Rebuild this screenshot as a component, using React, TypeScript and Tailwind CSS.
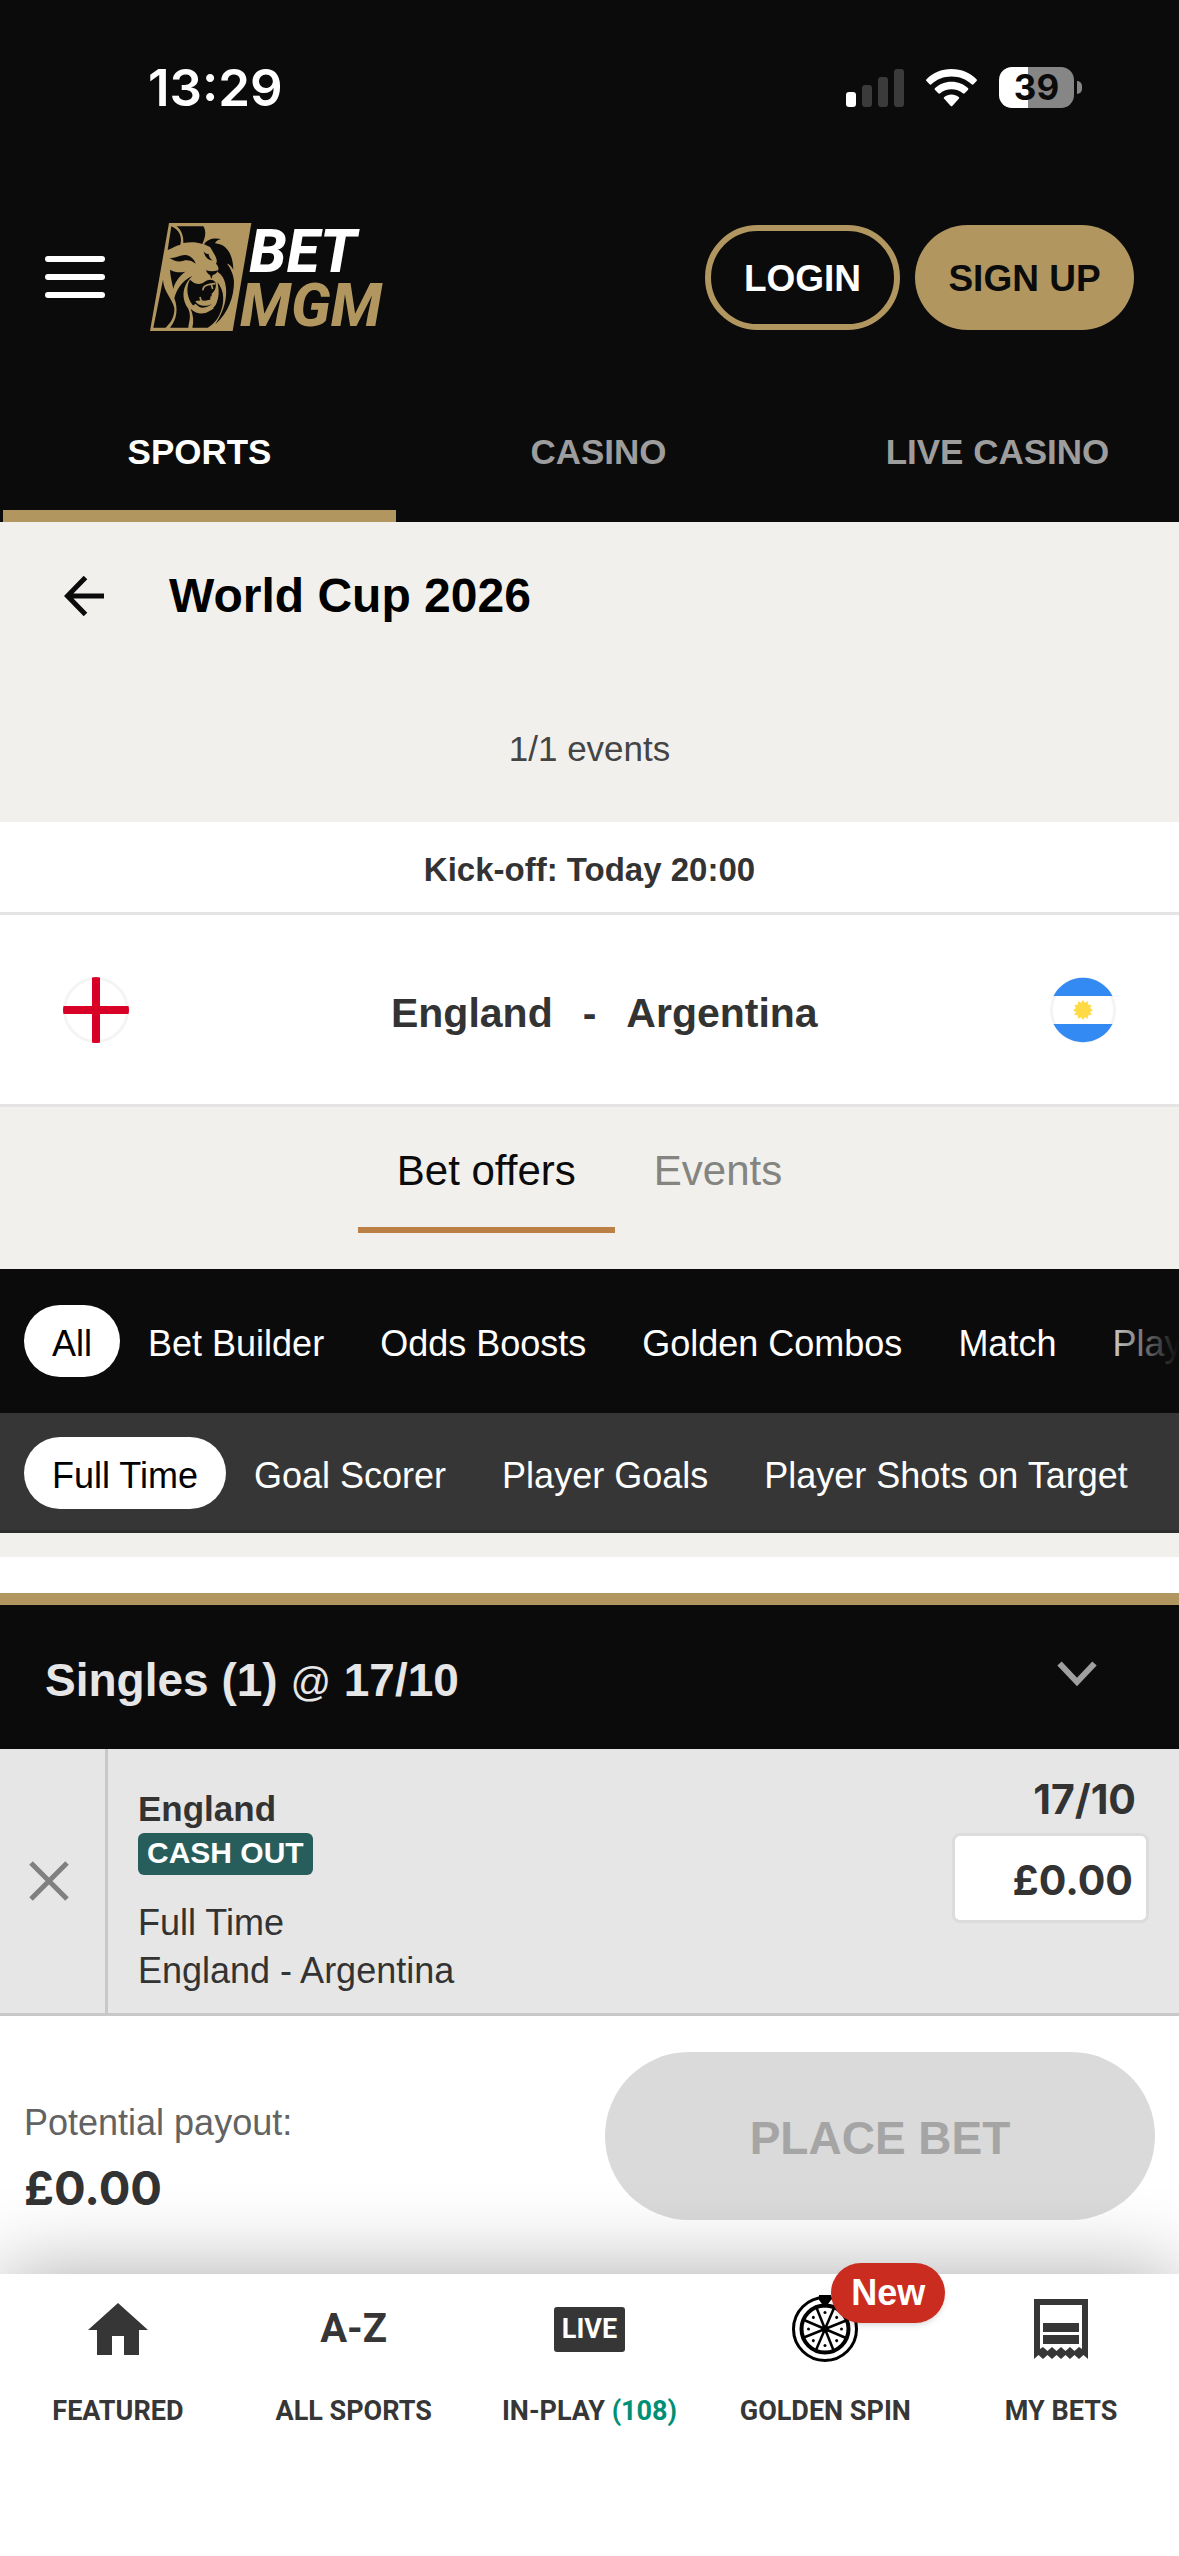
import { useState } from "react";

const products = ["Sports", "Casino", "Live Casino"];
const views = ["Bet offers", "Events"];
const categories = ["All", "Bet Builder", "Odds Boosts", "Golden Combos", "Match", "Player"];
const markets = ["Full Time", "Goal Scorer", "Player Goals", "Player Shots on Target"];

const wheelAngles = [0, 45, 90, 135, 180, 225, 270, 315];

function StatusBar() {
  return (
    <div className="flex h-[175px] items-center justify-between pl-[148px] pr-[97px] text-white">
      <span className="font-['Inter'] text-[51px] leading-none font-semibold">13:29</span>
      <div className="flex items-center gap-[22px]">
        <svg width="58" height="38" viewBox="0 0 58 38" aria-hidden="true">
          <rect x="0" y="23" width="10" height="15" rx="3" fill="#fff" />
          <rect x="16" y="16" width="10" height="22" rx="3" fill="#3b3b3b" />
          <rect x="32" y="8" width="10" height="30" rx="3" fill="#3b3b3b" />
          <rect x="48" y="0" width="10" height="38" rx="3" fill="#3b3b3b" />
        </svg>
        <svg width="51" height="38" viewBox="0 0 51 38" fill="#fff" aria-hidden="true">
          <path d="M25.5 0C35.500 0 44.500 3.900 50.500 10.200c.6.600.6 1.300 0 1.900l-3 3.100c-.6.600-1.300.6-1.900 0C40.200 10.200 33.200 7.500 25.500 7.500S10.800 10.200 5.400 15.200c-.6.600-1.300.6-1.900 0l-3-3.100c-.6-.6-.6-1.300 0-1.900C6.500 3.900 15.500 0 25.500 0Z" />
          <path d="M25.500 12.800c6.500 0 12.200 2.400 16.400 6.300.6.600.6 1.300 0 1.900l-3.200 3.200c-.6.600-1.200.6-1.900.1-3.100-2.600-7-4.100-11.300-4.100s-8.200 1.500-11.300 4.100c-.7.500-1.300.5-1.900-.1L9.100 21c-.6-.6-.6-1.300 0-1.900 4.200-3.900 9.900-6.300 16.400-6.300Z" />
          <path d="M25.500 25.600c2.700 0 5.200.9 7.200 2.400.7.500.7 1.200.1 1.800l-6.300 6.900c-.6.700-1.400.7-2 0l-6.300-6.900c-.6-.6-.6-1.300.1-1.800 2-1.500 4.500-2.400 7.200-2.400Z" />
        </svg>
        <div className="flex items-center gap-[3px]">
          <div className="flex h-[41px] w-[75px] items-center justify-center rounded-[13px] bg-linear-to-r from-white from-39% to-[#868686] to-39%">
            <span className="font-['Inter'] text-[35px] leading-none font-bold text-[#0b0b0b]">39</span>
          </div>
          <div className="h-[13px] w-[5px] rounded-r-full bg-[#868686]" />
        </div>
      </div>
    </div>
  );
}

function Logo() {
  return (
    <svg width="236" height="108" viewBox="60 36 708 324" role="img" aria-label="BetMGM">
      <path d="M117 36H364L308 360H60Z" fill="#b1965f" />
      <g fill="#0b0b0b">
        <path d="M124 46C148 56 157 78 151 101C136 104 126 112 113 117Z" />
        <path d="M140 46H220C230 62 226 80 217 99C198 92 178 93 160 96C161 74 154 57 140 46Z" />
        <path d="M222 100C232 84 252 79 273 84C263 86 257 91 255 97C292 100 309 132 310 176C305 166 299 159 291 158C302 172 311 192 312 212C312 256 296 304 256 340C279 302 291 270 288 232C286 206 276 190 262 182C268 174 266 166 258 158C266 146 252 128 240 108Z" />
        <path d="M118 140C136 144 150 130 168 132C182 135 193 144 197 158C186 149 172 146 161 149C145 154 132 150 118 140Z" />
        <path d="M221 121C224 136 233 148 247 148C240 142 236 136 236 128C232 131 226 128 221 121Z" />
        <path d="M120 176C134 184 150 186 166 182C147 196 134 214 130 234C126 214 121 196 120 176Z" />
        <path d="M99 206C101 244 127 262 133 292C134 318 122 336 107 350H70Z" />
        <path d="M187 195C154 210 138 240 133 262C145 292 141 326 120 350H175C177 330 185 316 174 292C155 264 154 226 187 195Z" />
        <path d="M180 206C166 230 172 262 188 282C206 296 232 292 246 278C226 290 202 284 196 270L216 268C226 272 236 270 245 264V248C256 240 260 226 256 214C246 202 232 206 222 214C208 224 192 218 180 206Z" />
        <path d="M228 178C240 182 252 182 264 178C262 186 254 191 248 192L244 204L240 192C234 190 230 184 228 178Z" />
        <path d="M187 350C192 332 190 312 182 293C208 318 238 308 257 282C268 260 268 236 262 214C284 238 285 278 268 312C258 332 246 342 233 350Z" />
      </g>
      <g fill="none" stroke="#b1965f" strokeWidth="5">
        <path d="M219 238C218 222 236 220 256 218M244 220L248 234" />
        <path d="M210 258L214 272C226 274 236 270 243 268L244 256" />
        <path d="M192 282C210 302 232 298 248 288" strokeWidth="12" />
      </g>
      <g className="font-['Roboto',sans-serif]" fontSize="180" fontWeight="800" fontStyle="italic">
        <text x="358" y="184" fill="#fff">BET</text>
        <text x="330" y="344" fill="#b1965f">MGM</text>
      </g>
    </svg>
  );
}

function EnglandFlag() {
  return (
    <svg width="66" height="66" viewBox="0 0 66 66" role="img" aria-label="England flag">
      <circle cx="33" cy="33" r="31.500" fill="#fff" stroke="#f4f4f4" strokeWidth="3" />
      <path d="M29 0.500Q33-.5 37 .5V29H65.500Q66.500 33 65.500 37H37V65.500Q33 66.500 29 65.500V37H.5Q-.5 33 .5 29H29Z" fill="#d80027" />
    </svg>
  );
}

function ArgentinaFlag() {
  return (
    <svg width="66" height="66" viewBox="0 0 66 66" role="img" aria-label="Argentina flag">
      <circle cx="33" cy="33" r="31.500" fill="#fff" stroke="#f4f4f4" strokeWidth="3" />
      <path d="M3.500 19A33 33 0 0 1 62.500 19ZM3.500 47A33 33 0 0 0 62.500 47Z" fill="#338af3" />
      <g fill="#ffda44">
        <circle cx="33" cy="33" r="7" />
        {[0, 30, 60, 90, 120, 150, 180, 210, 240, 270, 300, 330].map((a) => (
          <path key={a} d="M30 27.500L33 23L36 27.500Z" transform={`rotate(${a} 33 33)`} />
        ))}
      </g>
    </svg>
  );
}

function WheelIcon() {
  return (
    <svg width="66" height="68" viewBox="0 0 66 68" fill="none" stroke="#000" aria-hidden="true">
      <circle cx="33" cy="34" r="31.500" strokeWidth="3" />
      <circle cx="33" cy="34" r="23.500" strokeWidth="4" />
      {wheelAngles.map((a) => (
        <g key={a} transform={`rotate(${a} 33 34)`}>
          <path d="M33 34L42 13" strokeWidth="2.500" />
          <circle cx="33" cy="17.500" r="1.500" fill="#000" stroke="none" />
        </g>
      ))}
      <circle cx="33" cy="34" r="3.500" fill="#000" stroke="none" />
      <path d="M27 0H39V5L33 13L27 5Z" fill="#000" stroke="none" />
    </svg>
  );
}

function PillRow({ items, active, onSelect }: { items: string[]; active: string; onSelect: (item: string) => void }) {
  return (
    <div className="flex overflow-hidden pl-6">
      {items.map((item) => (
        <button
          key={item}
          type="button"
          onClick={() => onSelect(item)}
          className={`h-[72px] shrink-0 rounded-full px-7 pt-[6px] text-[36px] leading-none whitespace-nowrap ${
            item === active ? "bg-white text-black" : "text-white"
          }`}
        >
          {item}
        </button>
      ))}
    </div>
  );
}

export default function App() {
  const [product, setProduct] = useState("Sports");
  const [view, setView] = useState("Bet offers");
  const [category, setCategory] = useState("All");
  const [market, setMarket] = useState("Full Time");
  const [stake, setStake] = useState("£0.00");

  const navItem = "flex flex-1 flex-col items-center gap-[34px] pt-[25px]";
  const navIcon = "relative flex h-[60px] items-center justify-center";
  const navLabel = "font-['Roboto',sans-serif] text-[27px] leading-[36px] font-bold whitespace-nowrap uppercase";

  return (
    <div className="flex min-h-screen flex-col bg-white font-['Liberation_Sans',Arial,sans-serif] text-[#333]">
      <header className="bg-[#0b0b0b]">
        <StatusBar />
        <div className="flex h-[204px] items-center justify-between px-[45px]">
          <div className="flex items-center gap-[45px]">
            <button type="button" aria-label="Menu" className="flex w-[60px] flex-col gap-3">
              <span className="h-[6px] rounded-full bg-white" />
              <span className="h-[6px] rounded-full bg-white" />
              <span className="h-[6px] rounded-full bg-white" />
            </button>
            <Logo />
          </div>
          <div className="flex gap-[15px] text-[37px] font-bold">
            <button type="button" className="h-[105px] w-[195px] rounded-full border-6 border-[#b1965f] pt-1 text-white">LOGIN</button>
            <button type="button" className="h-[105px] w-[219px] rounded-full bg-[#b1965f] pt-1 text-[#0b0b0b]">SIGN UP</button>
          </div>
        </div>
        <div className="flex overflow-hidden">
          {products.map((p) => (
            <button
              key={p}
              type="button"
              onClick={() => setProduct(p)}
              className={`mx-[3px] h-[143px] shrink-0 basis-1/3 border-b-12 pt-4 text-[35px] font-bold uppercase ${
                p === product ? "border-[#b1965f] text-white" : "border-transparent text-[#9d9d9d]"
              }`}
            >
              {p}
            </button>
          ))}
        </div>
      </header>

      <section className="bg-[#f1f0ec]">
        <div className="flex h-[147px] items-center gap-[65px] px-16">
          <button type="button" aria-label="Back">
            <svg width="40" height="40" viewBox="0 0 40 40" fill="none" stroke="#0b0b0b" strokeWidth="5">
              <path d="M40 20H4M21.500 1.500L3.500 20L21.500 38.500" />
            </svg>
          </button>
          <h1 className="text-[48px] font-bold text-black">World Cup 2026</h1>
        </div>
        <p className="flex h-[153px] items-center justify-center pt-2 text-[35px] text-[#444]">1/1 events</p>
      </section>

      <section className="bg-white">
        <p className="flex h-[93px] items-center justify-center border-b-3 border-[#e4e4e4] pt-[6px] text-[33px] font-bold">
          Kick-off: Today 20:00
        </p>
        <div className="flex h-[192px] items-center border-b-3 border-[#e4e4e4] px-[63px]">
          <EnglandFlag />
          <div className="grid flex-1 grid-cols-[1fr_auto_1fr] gap-[30px] pt-2 text-[41px] font-bold">
            <span className="text-right">England</span>
            <span>-</span>
            <span>Argentina</span>
          </div>
          <ArgentinaFlag />
        </div>
      </section>

      <div className="flex justify-center bg-[#f1f0ec] pb-9">
        {views.map((v) => (
          <button
            key={v}
            type="button"
            onClick={() => setView(v)}
            className={`h-[126px] border-b-6 px-[39px] pt-[6px] text-[42px] ${
              v === view ? "border-[#bb8044] text-[#0b0b0b]" : "border-transparent text-[#848480]"
            }`}
          >
            {v}
          </button>
        ))}
      </div>

      <div className="relative bg-[#0b0b0b] py-9">
        <PillRow items={categories} active={category} onSelect={setCategory} />
        <div className="pointer-events-none absolute inset-y-0 right-0 w-[84px] bg-linear-to-l from-[#0b0b0b] to-transparent" />
      </div>
      <div className="relative border-b-3 border-[#2e2e2e] bg-[#363636] pt-6 pb-[21px]">
        <PillRow items={markets} active={market} onSelect={setMarket} />
        <div className="pointer-events-none absolute inset-y-0 right-0 w-[60px] bg-linear-to-l from-[#363636] to-transparent" />
      </div>
      <div className="h-6 bg-[#f1f0ec]" />

      <section className="mt-9 border-t-12 border-[#b1965f]">
        <div className="flex h-36 items-center justify-between bg-[#0b0b0b] pr-[82px] pl-[45px] pt-[6px]">
          <h2 className="text-[46px] font-bold text-[#e6e6e6]">
            Singles (1) <span className="text-[40px] font-normal">@</span> 17/10
          </h2>
          <button type="button" aria-label="Collapse bet slip" className="pb-3">
            <svg width="40" height="26" viewBox="0 0 40 26" fill="none" stroke="#9f9f9f" strokeWidth="6">
              <path d="M2.500 2.500L20 21L37.500 2.500" />
            </svg>
          </button>
        </div>
        <div className="flex h-[267px] border-b-3 border-[#c8c8c8] bg-[#e6e6e6]">
          <button type="button" aria-label="Remove bet" className="flex w-[108px] items-center border-r-3 border-[#c8c8c8] pl-[29px]">
            <svg width="40" height="40" viewBox="0 0 40 40" fill="none" stroke="#808080" strokeWidth="5">
              <path d="M2 2L38 38M38 2L2 38" />
            </svg>
          </button>
          <div className="flex flex-1 flex-col items-start pt-9 pl-[30px] text-[36px] leading-[48px]">
            <span className="text-[35px] font-bold">England</span>
            <span className="h-[42px] rounded-[6px] bg-[#275e5b] px-[9px] text-[30px] leading-[40px] font-bold text-white">CASH OUT</span>
            <span className="mt-6">Full Time</span>
            <span>England - Argentina</span>
          </div>
          <div className="mr-[30px] flex w-[197px] flex-col pt-[18px] font-['Inter'] text-[41px] font-bold">
            <span className="pr-[13px] text-right leading-[64px]">17/10</span>
            <input
              type="text"
              aria-label="Stake"
              value={stake}
              onChange={(e) => setStake(e.target.value)}
              className="mt-[2px] h-[90px] w-full rounded-[8px] border-3 border-[#dcdcdc] bg-white pt-1 pr-[13px] text-right"
            />
          </div>
        </div>
        <div className="flex h-[258px] items-start justify-between px-6 pt-9">
          <div className="pt-12">
            <p className="text-[36px] leading-[46px] text-[#636363]">Potential payout:</p>
            <p className="pt-3 font-['Inter'] text-[47px] leading-[60px] font-bold">£0.00</p>
          </div>
          <button type="button" disabled className="h-[168px] w-[550px] rounded-full bg-[#dadada] pt-1 text-[46px] font-bold text-[#a5a5a5]">
            PLACE BET
          </button>
        </div>
      </section>

      <nav className="relative flex flex-1 bg-white text-[#363636] shadow-[0_0_80px_rgba(0,0,0,0.33)]">
        <a href="#featured" className={navItem}>
          <span className={navIcon}>
            <svg width="60" height="52" viewBox="0 0 60 52" fill="#363636" aria-hidden="true">
              <path d="M30 0L60 27H51V52H36V33H24V52H9V27H0Z" />
            </svg>
          </span>
          <span className={navLabel}>Featured</span>
        </a>
        <a href="#all-sports" className={navItem}>
          <span className={navIcon}>
            <span className="font-['Roboto',sans-serif] text-[40px] leading-[60px] font-bold">A-Z</span>
          </span>
          <span className={navLabel}>All Sports</span>
        </a>
        <a href="#in-play" className={navItem}>
          <span className={navIcon}>
            <span className="h-[45px] rounded-[3px] bg-[#363636] px-2 font-['Roboto',sans-serif] text-[27px] leading-[45px] font-bold text-white">LIVE</span>
          </span>
          <span className={navLabel}>In-Play <span className="text-[#008f75]">(108)</span></span>
        </a>
        <a href="#golden-spin" className={navItem}>
          <span className={navIcon}>
            <WheelIcon />
            <span className="absolute -top-9 left-[39px] flex h-[60px] w-[114px] items-center justify-center rounded-full bg-[#ca2c20] text-[36px] font-bold text-white shadow-md">New</span>
          </span>
          <span className={navLabel}>Golden Spin</span>
        </a>
        <a href="#my-bets" className={navItem}>
          <span className={navIcon}>
            <svg width="54" height="60" viewBox="0 0 54 60" fill="#363636" aria-hidden="true">
              <path fillRule="evenodd" d="M0 0H54V60L49.500 56L45 60L40.500 56L36 60L31.500 56L27 60L22.500 56L18 60L13.500 56L9 60L4.500 56L0 60ZM6 6V50L9 48L13.500 52L18 48L22.500 52L27 48L31.500 52L36 48L40.500 52L45 48L48 50V6Z" />
              <path d="M9 24H45V33H9ZM9 36H45V45H9Z" />
            </svg>
          </span>
          <span className={navLabel}>My Bets</span>
        </a>
      </nav>
    </div>
  );
}
